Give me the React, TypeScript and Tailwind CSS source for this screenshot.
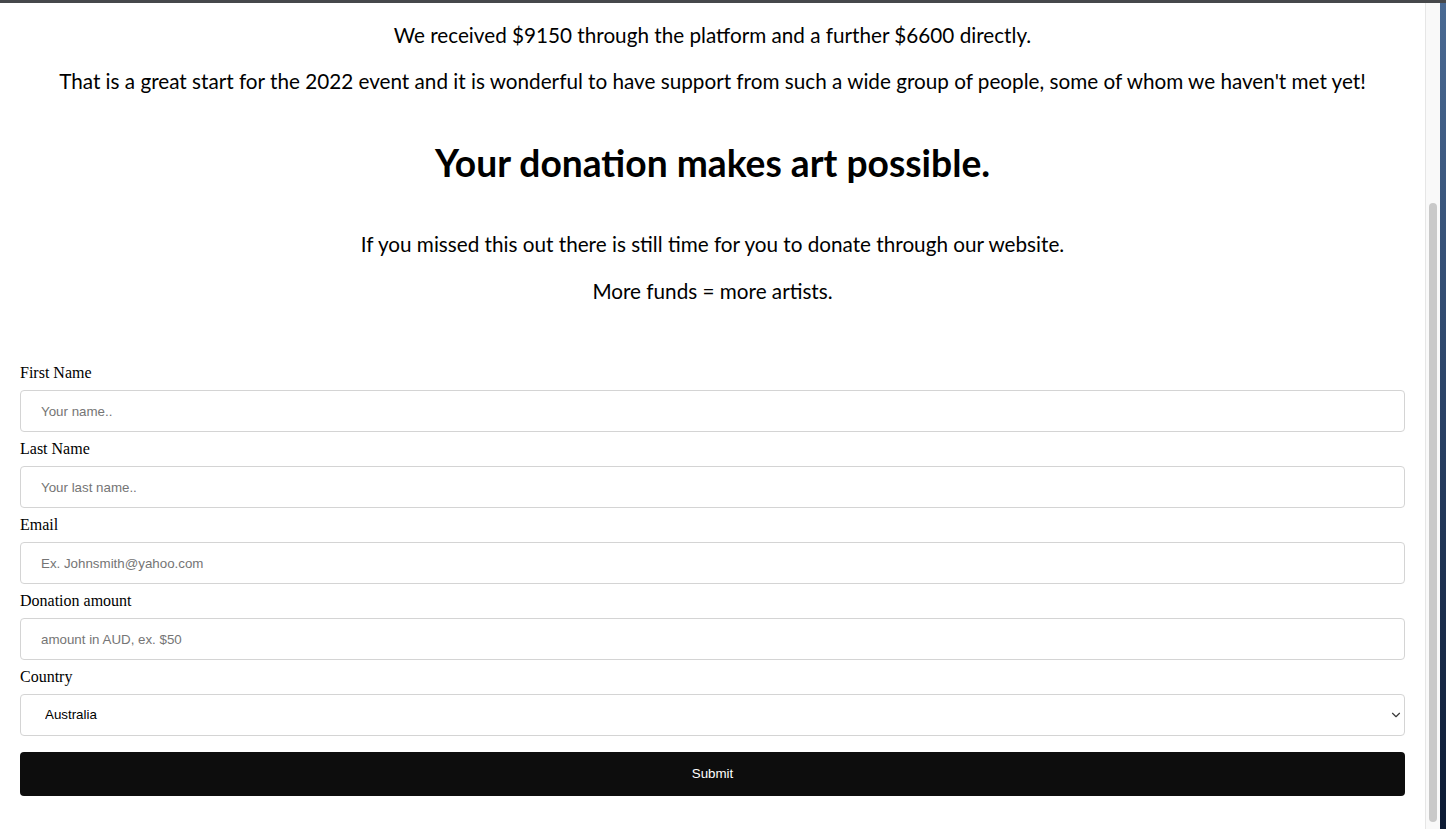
import { ChevronDown } from "lucide-react"

const fields = [
  { label: "First Name", placeholder: "Your name.." },
  { label: "Last Name", placeholder: "Your last name.." },
  { label: "Email", placeholder: "Ex. Johnsmith@yahoo.com" },
  { label: "Donation amount", placeholder: "amount in AUD, ex. $50" },
]

export default function App() {
  return (
    <div className="h-[829px] w-full overflow-hidden bg-white flex flex-col">
      <div className="h-[3px] bg-[#46484b] shrink-0" />
      <div className="flex flex-1 min-h-0">
        <main className="flex-1 px-5 text-black">
          <div className="text-center font-['Lato','Open_Sans',sans-serif] text-[20.7px] leading-[26px]">
            <p className="mt-[19px]">We received $9150 through the platform and a further $6600 directly.</p>
            <p className="mt-5">
              That is a great start for the 2022 event and it is wonderful to have support from such a wide group of
              people, some of whom we haven't met yet!
            </p>
            <h2 className="mt-[48px] text-[37.2px] leading-[42px] font-bold">Your donation makes art possible.</h2>
            <p className="mt-[47px]">If you missed this out there is still time for you to donate through our website.</p>
            <p className="mt-[21px]">More funds = more artists.</p>
          </div>

          <form className="mt-[60px] flex flex-col" onSubmit={(e) => e.preventDefault()}>
            {fields.map((f) => (
              <div key={f.label} className="flex flex-col">
                <label className="font-['Liberation_Serif',serif] text-[16px] leading-[18px]">{f.label}</label>
                <input
                  placeholder={f.placeholder}
                  className="my-2 h-[42px] w-full rounded border border-[#d4d4d4] px-5 font-['Liberation_Sans',Arial,sans-serif] text-[13.333px] text-black placeholder:text-[#757575] outline-none"
                />
              </div>
            ))}
            <label className="font-['Liberation_Serif',serif] text-[16px] leading-[18px]">Country</label>
            <div className="relative my-2">
              <select className="h-[42px] w-full appearance-none rounded border border-[#d4d4d4] bg-white pl-6 pr-8 font-['Liberation_Sans',Arial,sans-serif] text-[13.333px] text-black outline-none">
                <option>Australia</option>
                <option>New Zealand</option>
                <option>Other</option>
              </select>
              <ChevronDown
                size={14}
                strokeWidth={2}
                className="pointer-events-none absolute right-[2px] top-[14px] text-[#3a3a3a]"
              />
            </div>
            <button
              type="submit"
              className="mt-2 h-[44px] w-full rounded bg-[#0d0d0d] font-['Liberation_Sans',Arial,sans-serif] text-[13.333px] text-white"
            >
              Submit
            </button>
          </form>
        </main>

        <div className="w-[15px] shrink-0 border-l border-[#e6e6e6] bg-[#f9f9f9] flex flex-col pt-[200px] pb-[7px] items-center">
          <div className="w-[8px] flex-1 rounded-full bg-[#c9c9c9]" />
        </div>
        <div className="w-[6px] shrink-0 bg-gradient-to-b from-[#4a6a93] via-[#2a4266] to-[#0c1a33]" />
      </div>
    </div>
  )
}
